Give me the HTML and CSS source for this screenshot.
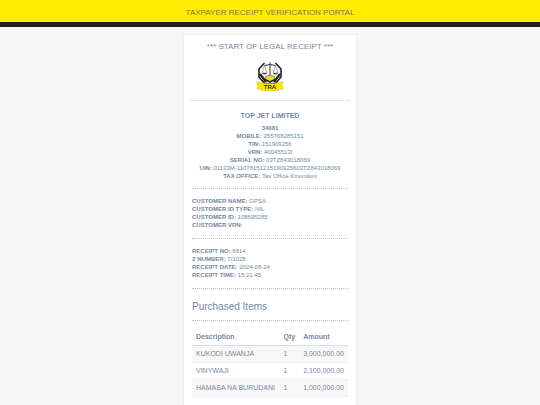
FILE: index.html
```html
<!DOCTYPE html>
<html lang="en">
<head>
<meta charset="utf-8">
<meta name="viewport" content="width=device-width, initial-scale=1">
<title>Taxpayer Receipt Verification Portal</title>
<link rel="stylesheet" href="styles.css">
</head>
<body>
<header class="topbar">TAXPAYER RECEIPT VERIFICATION PORTAL</header>
<main class="receipt">
  <section class="intro">
    <h1 class="start">*** START OF LEGAL RECEIPT ***</h1>
    <svg class="logo" viewBox="0 0 28 30" role="img" aria-label="TRA">
      <path d="M8.500 2 3 8v8l5.500 6.500h11L25 16V8L19.500 2" fill="none" stroke="#222" stroke-width="1.600"/>
      <path d="M4 13l6 8M24 13l-6 8" stroke="#222" stroke-width="2.200"/>
      <path d="M14 1.500v15M8.500 4.500q5.500-2 11 0" fill="none" stroke="#333" stroke-width="1"/>
      <path d="M8.500 4.500 6 12h5zM19.500 4.500 17 12h5z" fill="none" stroke="#777" stroke-width=".6"/>
      <path d="M6 12h5q-2.500 3-5 0zM17 12h5q-2.500 3-5 0z" fill="#444"/>
      <circle cx="14" cy="9" r="1.300" fill="#c9a91c"/>
      <path d="M9.500 15.500 14 14l4.500 1.500v3L14 21l-4.500-2.500z" fill="#eedb28" stroke="#555" stroke-width=".6"/>
      <path d="M9 18.500 14 21l5-2.500" fill="none" stroke="#222" stroke-width="1.400"/>
      <path d="M.8 20.500 6 22q8 1.200 16 0l5.200-1.500-1.200 4 1.200 3.500-4.700.5v1H5.500v-1L.8 28 2 24.500z" fill="#f7e600" stroke="#c4b41c" stroke-width=".4"/>
      <text x="14" y="28" text-anchor="middle" class="logo-text">TRA</text>
    </svg>
  </section>
  <section class="details company">
    <h2 class="company-name">TOP JET LIMITED</h2>
    <b>34081</b>
    <div><b>MOBILE:</b> 255768285151</div>
    <div><b>TIN:</b> 151909256</div>
    <div><b>VRN:</b> 40045513I</div>
    <div><b>SERIAL NO:</b> 03TZ843018069</div>
    <div><b>UIN:</b> 01133M-11078151215190925603TZ843018069</div>
    <div><b>TAX OFFICE:</b> Tax Office Kinondoni</div>
  </section>
  <section class="details">
    <div><b>CUSTOMER NAME:</b> GPSA</div>
    <div><b>CUSTOMER ID TYPE:</b> NIL</div>
    <div><b>CUSTOMER ID:</b> 108695285</div>
    <div><b>CUSTOMER VRN:</b></div>
  </section>
  <section class="details">
    <div><b>RECEIPT NO:</b> 6814</div>
    <div><b>Z NUMBER:</b> 7/1028</div>
    <div><b>RECEIPT DATE:</b> 2024-08-24</div>
    <div><b>RECEIPT TIME:</b> 15:21:45</div>
  </section>
  <h2 class="items-title">Purchased Items</h2>
  <table class="items">
    <thead><tr><th class="description">Description</th><th>Qty</th><th>Amount</th></tr></thead>
    <tbody>
      <tr><td>KUKODI UWANJA</td><td>1</td><td>3,000,000.00</td></tr>
      <tr><td>VINYWAJI</td><td>1</td><td>2,100,000.00</td></tr>
      <tr><td>HAMASA NA BURUDANI</td><td>1</td><td>1,000,000.00</td></tr>
    </tbody>
  </table>
</main>
</body>
</html>
```
FILE: styles.css
```css
* { box-sizing: border-box; }
body {
  margin: 0;
  background: #f6f6f6;
  color: #7589a1;
  font-family: "Liberation Sans", Arial, sans-serif;
  font-size: 6px;
  line-height: 8px;
}
h1, h2 { margin: 0; }
.topbar {
  padding-top: 4px;
  border-bottom: 5px solid #202020;
  background: #ffec00;
  color: #75803c;
  font-size: 8px;
  line-height: 18px;
  text-align: center;
}
.receipt {
  width: 32.2%;
  min-width: 174px;
  margin: 7px auto 0;
  padding: 0 8px 8px;
  border: 1px solid #f0f0f0;
  background: #fff;
}
.intro {
  margin: 0 -2px;
  padding: 6px 0 9px;
  border-bottom: 1px solid #e5e8eb;
  text-align: center;
}
.start {
  font-size: 8px;
  font-weight: 400;
  line-height: 12px;
}
.logo {
  display: block;
  width: 28px;
  height: 30px;
  margin: 8px auto 0;
}
.logo-text { fill: #333; font-size: 6px; font-weight: 700; }
.details {
  padding: 8px 0 9px;
  border-bottom: 1px dotted #b4bcc5;
}
.company { padding: 9px 0 8px; text-align: center; }
.company-name {
  margin-bottom: 2px;
  font-size: 7px;
  line-height: 12px;
}
.items-title {
  padding: 12px 0 7px;
  border-bottom: 1px dotted #b4bcc5;
  font-size: 10px;
  font-weight: 400;
  line-height: 12px;
}
.items {
  width: 100%;
  margin-top: 8px;
  border-collapse: collapse;
  font-size: 7px;
  line-height: 8px;
}
.items th, .items td {
  padding: 4px;
  text-align: left;
  white-space: nowrap;
}
.items .description { width: 58%; }
.items th { border-bottom: 1px solid #d9dde1; }
.items td { border-bottom: 1px solid #eceef0; }
.items tbody tr:nth-child(odd) { background: #f8f8f8; }
```
